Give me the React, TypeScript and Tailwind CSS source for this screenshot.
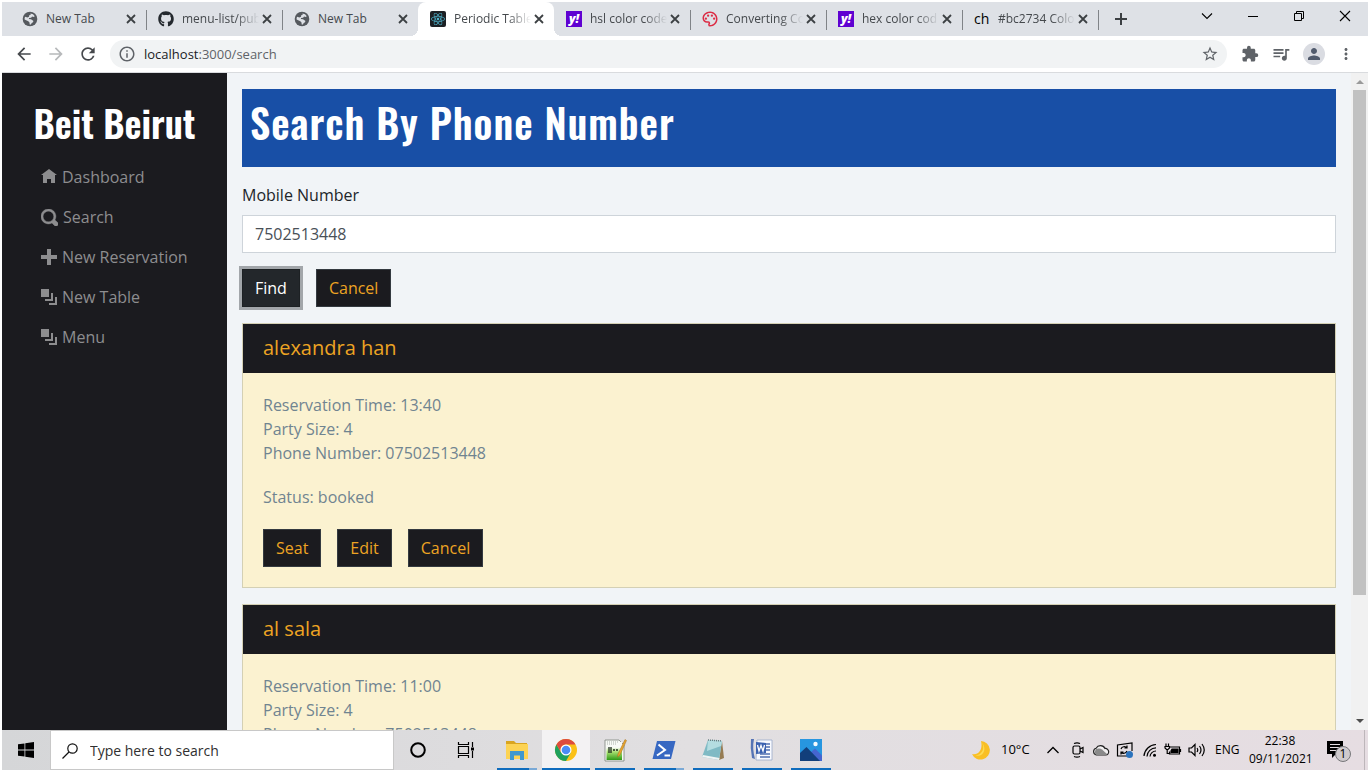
import React, { useState } from "react";
import {
  MdArrowBack,
  MdArrowForward,
  MdExtension,
  MdInfoOutline,
  MdMoreVert,
  MdOutlinePalette,
  MdPerson,
  MdQueueMusic,
  MdRefresh,
  MdStarBorder,
} from "react-icons/md";
import { FaGithub, FaReact } from "react-icons/fa";

/* ---------- Tab favicons ---------- */

const Globe = () => (
  <svg viewBox="0 0 16 16" className="size-4">
    <circle cx="8" cy="8" r="7.300" fill="#55595e" />
    <path
      d="M8.500 2.500q3 .3 4.300 2.700l-1.300.9-1.400-.6-1 1.200-2 .2-.3 1.200 2.200.2 2.500 1.800-.8 1.300-1 .6-.8 1.600-1.200-.1-.2-1.900-1.200-1.400L2.600 8.600q-.2-1.500.5-2.800l2.400.6 1.500-.6.2-1.500 1.500-.6z"
      fill="#dee1e6"
    />
  </svg>
);
const GitHub = () => <FaGithub className="size-4 text-[#24292e]" />;
const ReactLogo = () => (
  <span className="flex size-4 items-center justify-center rounded-xs bg-[#1c2024]">
    <FaReact className="size-[14px] text-[#4fb4cc]" />
  </span>
);
const Yahoo = () => (
  <span className="flex size-4 items-center justify-center bg-[#5f01d1] font-['Open_Sans',sans-serif] text-xs leading-none font-extrabold text-white italic">
    y!
  </span>
);
const Palette = () => <MdOutlinePalette className="size-[18px] shrink-0 -scale-x-100 text-[#dc2c45]" />;
const Ch = () => <span className="w-4 text-sm leading-4 font-medium text-black">ch</span>;

type Tab = { title: string; icon: () => React.ReactElement; active?: boolean; divider?: boolean };

const TABS: Tab[] = [
  { title: "New Tab", icon: Globe, divider: true },
  { title: "menu-list/pub", icon: GitHub, divider: true },
  { title: "New Tab", icon: Globe },
  { title: "Periodic Table", icon: ReactLogo, active: true },
  { title: "hsl color code", icon: Yahoo, divider: true },
  { title: "Converting Co", icon: Palette, divider: true },
  { title: "hex color cod", icon: Yahoo, divider: true },
  { title: "#bc2734 Colo", icon: Ch, divider: true },
];

function CloseMark() {
  return (
    <svg viewBox="0 0 10 10" className="size-[10px]" aria-hidden="true">
      <path d="M1 1l8 8M9 1l-8 8" stroke="#3c4043" strokeWidth="1.8" fill="none" />
    </svg>
  );
}

function TabStrip() {
  return (
    <div className="flex h-[34px] shrink-0 items-stretch bg-[#dee1e6] pl-2">
      {TABS.map((tab, i) => {
        const Icon = tab.icon;
        return (
          <div
            key={i}
            className={
              "relative flex w-[136px] min-w-0 items-center pl-3 text-xs text-[#45494d] " +
              (tab.active ? "rounded-t-lg bg-white" : "")
            }
          >
            <span className="flex size-4 shrink-0 items-center justify-center">
              <Icon />
            </span>
            <span
              className={
                "ml-2 min-w-0 flex-1 whitespace-nowrap " +
                (tab.title === "New Tab" ? "" : "[mask-image:linear-gradient(to_right,black_70%,transparent)]")
              }
            >
              {tab.title}
            </span>
            <button
              type="button"
              aria-label="Close tab"
              className="mr-[7px] flex size-4 shrink-0 items-center justify-center"
            >
              <CloseMark />
            </button>
            {tab.divider && <span className="absolute top-2 -right-px h-5 w-px bg-[#808387]" />}
            {tab.active && (
              <>
                <span className="absolute bottom-0 -left-2 size-2 bg-[radial-gradient(circle_at_0_0,#dee1e6_8px,white_8px)]" />
                <span className="absolute -right-2 bottom-0 size-2 bg-[radial-gradient(circle_at_100%_0,#dee1e6_8px,white_8px)]" />
              </>
            )}
          </div>
        );
      })}
      <button type="button" aria-label="New tab" className="flex w-[46px] items-center justify-center">
        <svg viewBox="0 0 12 12" className="size-3">
          <path d="M6 0v12M0 6h12" stroke="#3c4043" strokeWidth="2" />
        </svg>
      </button>
      <div className="ml-auto flex h-7 items-center text-black">
        <button type="button" aria-label="Search tabs" className="flex w-[46px] justify-center">
          <svg viewBox="0 0 12 12" className="size-3">
            <path d="M1 3.5l5 5 5-5" stroke="currentColor" strokeWidth="1.1" fill="none" />
          </svg>
        </button>
        <button type="button" aria-label="Minimise" className="flex w-[46px] justify-center">
          <svg viewBox="0 0 12 12" className="size-3">
            <path d="M1 6.5h10" stroke="currentColor" />
          </svg>
        </button>
        <button type="button" aria-label="Restore" className="flex w-[46px] justify-center">
          <svg viewBox="0 0 12 12" className="size-3" fill="none" stroke="currentColor">
            <path d="M1.5 3.5h7v7h-7zM3.5 3.5v-2h7v7h-2" />
          </svg>
        </button>
        <button type="button" aria-label="Close window" className="flex w-[46px] justify-center">
          <svg viewBox="0 0 12 12" className="size-3">
            <path d="M1 1l10 10M11 1L1 11" stroke="currentColor" strokeWidth="1.1" />
          </svg>
        </button>
      </div>
    </div>
  );
}

function AddressBar() {
  return (
    <div className="flex h-[37px] shrink-0 items-center border-b border-[#d9dbde] bg-white pr-[13px] pl-3 text-[#5f6368]">
      <button type="button" aria-label="Back" className="w-8 text-[#46494d]">
        <MdArrowBack className="size-5" />
      </button>
      <button type="button" aria-label="Forward" className="w-8 text-[#b7b9bb]">
        <MdArrowForward className="size-5" />
      </button>
      <button type="button" aria-label="Reload" className="w-8 text-[#46494d]">
        <MdRefresh className="size-5" />
      </button>
      <div className="flex h-7 min-w-0 flex-1 items-center rounded-full bg-[#f1f3f4] px-2">
        <MdInfoOutline className="size-[18px] shrink-0" />
        <a href="#search" className="ml-2 text-[13px] leading-5 text-[#5f6368]">
          <span className="text-[#202124]">localhost</span>:3000/search
        </a>
        <button type="button" aria-label="Bookmark" className="ml-auto">
          <MdStarBorder className="size-[18px]" />
        </button>
      </div>
      <button type="button" aria-label="Extensions" className="ml-[14px]">
        <MdExtension className="size-[18px]" />
      </button>
      <button type="button" aria-label="Media" className="ml-3">
        <MdQueueMusic className="size-5" />
      </button>
      <button
        type="button"
        aria-label="Profile"
        className="ml-3 flex size-[22px] items-center justify-center rounded-full bg-[#dadce2] text-[#515b6d]"
      >
        <MdPerson className="size-[18px]" />
      </button>
      <button type="button" aria-label="Menu" className="ml-3">
        <MdMoreVert className="size-[18px]" />
      </button>
    </div>
  );
}

/* ---------- Sidebar ---------- */

const GLYPHS = {
  home: "M4 0l-4 3h1v4h2v-2h2v2h2v-4.03l1 .03-4-3z",
  search:
    "M3.5 0c-1.93 0-3.5 1.57-3.5 3.5s1.57 3.5 3.5 3.5c.59 0 1.17-.14 1.66-.41a1 1 0 0 0 .13.13l1 1a1.02 1.02 0 1 0 1.44-1.44l-1-1a1 1 0 0 0-.16-.13c.27-.49.44-1.06.44-1.66 0-1.93-1.55-3.5-3.5-3.5zm0 1c1.39 0 2.5 1.11 2.5 2.5 0 .66-.24 1.27-.66 1.72-.01.01-.02.02-.03.03a1 1 0 0 0-.13.13c-.44.4-1.04.63-1.69.63-1.39 0-2.5-1.11-2.5-2.5s1.11-2.5 2.5-2.5z",
  plus: "M3 0v3h-3v2h3v3h2v-3h3v-2h-3v-3h-2z",
  layers: "M0 0v4h4v-4h-4zm5 2v3h-3v1h4v-4h-1zm2 2v3h-3v1h4v-4h-1z",
};

const NAV: { label: string; glyph: keyof typeof GLYPHS }[] = [
  { label: "Dashboard", glyph: "home" },
  { label: "Search", glyph: "search" },
  { label: "New Reservation", glyph: "plus" },
  { label: "New Table", glyph: "layers" },
  { label: "Menu", glyph: "layers" },
];

const DISPLAY = "font-['Oswald','Liberation_Sans_Narrow',sans-serif]";

function Sidebar() {
  return (
    <nav className="w-[225px] shrink-0 bg-[#1b1b1f] pt-[26px]">
      <a
        href="#home"
        className={DISPLAY + " block text-center text-[37px] leading-[48px] font-semibold whitespace-nowrap text-white"}
      >
        Beit Beirut
      </a>
      <ul className="mt-[10px] pl-[39px]">
        {NAV.map((item) => (
          <li key={item.label}>
            <a href={"#" + item.label} className="flex h-10 items-center gap-[5px] text-base text-[#8d8d8f]">
              <svg
                viewBox="0 0 8 8"
                className={
                  item.glyph === "search"
                    ? "size-[17px] fill-[#8d8d8f] stroke-[#8d8d8f] [stroke-width:0.2]"
                    : "size-4 fill-[#8d8d8f]"
                }
                aria-hidden="true"
              >
                <path d={GLYPHS[item.glyph]} />
              </svg>
              {item.label}
            </a>
          </li>
        ))}
      </ul>
    </nav>
  );
}

/* ---------- Search page ---------- */

const DARK_BUTTON = "h-[38px] border border-[#343a40] bg-[#1b1b1f] px-3 text-base leading-6 text-[#eda423]";

const RESERVATIONS = [
  { name: "alexandra han", time: "13:40", size: 4, phone: "07502513448" },
  { name: "al sala", time: "11:00", size: 4, phone: "7502513448" },
];

function ReservationCard({ name, time, size, phone }: (typeof RESERVATIONS)[number]) {
  return (
    <article className="mt-4 border border-[#d4d0b4] bg-[#fbf2d0]">
      <h2 className="bg-[#1b1b1f] px-5 pt-3 pb-[13px] text-xl leading-6 text-[#eda423]">{name}</h2>
      <div className="p-5 text-base leading-6 text-[#708490]">
        <p>Reservation Time: {time}</p>
        <p>Party Size: {size}</p>
        <p>Phone Number: {phone}</p>
        <p className="mt-5">Status: booked</p>
        <div className="mt-5 flex gap-4">
          <button type="button" className={DARK_BUTTON}>Seat</button>
          <button type="button" className={DARK_BUTTON}>Edit</button>
          <button type="button" className={DARK_BUTTON}>Cancel</button>
        </div>
      </div>
    </article>
  );
}

function SearchPage() {
  const [mobile, setMobile] = useState("7502513448");
  return (
    <main className="min-w-0 flex-1 overflow-hidden bg-[#f1f4f7] px-[15px] pt-4">
      <h1
        className={
          DISPLAY +
          " bg-[#184fa6] px-2 pt-[9px] pb-[21px] text-[40px] leading-[48px] font-semibold tracking-wide whitespace-nowrap text-white"
        }
      >
        Search By Phone Number
      </h1>
      <form onSubmit={(e) => e.preventDefault()}>
        <label htmlFor="mobile" className="mt-4 block text-base leading-6 text-[#212529]">
          Mobile Number
        </label>
        <input
          id="mobile"
          type="text"
          value={mobile}
          onChange={(e) => setMobile(e.target.value)}
          className="mt-2 block h-[38px] w-full border border-[#ced4da] bg-white px-3 text-base text-[#495057] outline-none"
        />
        <div className="mt-4 flex gap-4">
          <button
            type="submit"
            className="h-[38px] border border-[#1d2124] bg-[#23272b] px-3 text-base leading-6 text-white ring-3 ring-[#a2a6aa]"
          >
            Find
          </button>
          <button type="button" className={DARK_BUTTON}>Cancel</button>
        </div>
      </form>
      {RESERVATIONS.map((r) => (
        <ReservationCard key={r.name} {...r} />
      ))}
    </main>
  );
}

function ScrollBar() {
  return (
    <div className="flex w-[17px] shrink-0 flex-col items-center justify-between bg-[#f1f1f1]" aria-hidden="true">
      <svg viewBox="0 0 17 17" className="size-[17px] shrink-0">
        <path d="M5 11h8l-4-4z" fill="#9a9a9a" />
      </svg>
      <div className="w-[13px] flex-1">
        <div className="h-[81%] bg-[#c1c1c1]" />
      </div>
      <svg viewBox="0 0 17 17" className="size-[17px] shrink-0">
        <path d="M5 6h8l-4 4z" fill="#4d4d4d" />
      </svg>
    </div>
  );
}

/* ---------- Taskbar ---------- */

const ExplorerIcon = () => (
  <svg viewBox="0 0 24 24" className="size-6">
    <path d="M1 3h8l2 2h11v5H1z" fill="#d9a520" />
    <path d="M1 6h22v15H1z" fill="#fcd354" />
    <path d="M5 13h14v9h-4v-4.500H9V22H5z" fill="#3f98cf" />
  </svg>
);
const ChromeIcon = () => (
  <svg viewBox="0 0 24 24" className="size-6">
    <circle cx="12" cy="12" r="11" fill="#fbc116" />
    <path d="M2.470 6.500A11 11 0 0 0 12 23l4.760-8.250L12 12 7.240 14.750z" fill="#1fa15d" />
    <path d="M2.470 6.500A11 11 0 0 1 21.530 6.500H12a5.500 5.500 0 0 0-4.760 8.250z" fill="#dd4b3e" />
    <circle cx="12" cy="12" r="5.500" fill="#fff" />
    <circle cx="12" cy="12" r="4.300" fill="#4a8cf6" />
  </svg>
);
const NotepadPlusIcon = () => (
  <svg viewBox="0 0 24 24" className="size-6">
    <defs>
      <linearGradient id="page-fade" x1="0" y1="0" x2="0" y2="1">
        <stop offset="0.3" stopColor="#f8faf6" />
        <stop offset="0.55" stopColor="#a8e070" />
        <stop offset="1" stopColor="#2f9a17" />
      </linearGradient>
    </defs>
    <path d="M2 2h14l5 5v16H2z" fill="#f7f9f5" stroke="#7c837b" strokeWidth=".8" />
    <path d="M3.500 4H19v18H3.500z" fill="url(#page-fade)" />
    <path d="M4 4h11M4 6h10" stroke="#aab2ab" strokeDasharray="1 1" />
    <path d="M6 9v6M8 9v6M10 12h2M13 12h2" stroke="#1c2a1b" strokeWidth="1.300" />
    <path d="M22 1.500l1.500 1L17 17l-2.500 2 .5-3z" fill="#e9a52a" stroke="#9d6d23" strokeWidth=".5" />
  </svg>
);
const PowerShellIcon = () => (
  <svg viewBox="0 0 24 24" className="size-6">
    <path d="M5 3h18.500l-4.500 18H.5z" fill="#3768c2" />
    <path d="M6.500 6.500l6.500 5.500-8 5.500M12.500 17.500h5.500" fill="none" stroke="#fff" strokeWidth="2" />
  </svg>
);
const NotepadIcon = () => (
  <svg viewBox="0 0 24 24" className="size-6">
    <path d="M21 3l2 17-5 2z" fill="#967c53" />
    <path d="M7 2l14 1-3 19-17-3z" fill="#7fbac4" />
    <path d="M7 2l14 1-1 5L6 13z" fill="#b4dde1" />
    <path d="M1 19l17 3 .5-2L2 17z" fill="#eef3f3" />
    <path d="M7 2l14 1" stroke="#667d80" strokeWidth="1.500" strokeDasharray="1 1" />
  </svg>
);
const WordIcon = () => (
  <svg viewBox="0 0 24 24" className="size-6">
    <path d="M7 2h15v20H6z" fill="#f8faff" stroke="#99a9c9" strokeWidth=".8" />
    <path d="M15 6h5M15 9h5M15 12h5M10 16h10M10 19h10" stroke="#5070b0" strokeWidth="1.300" />
    <path d="M1 1h3q-2 9 1 20l-3-1Q0 10 1 1z" fill="#5574b5" />
    <path d="M6 4l10 1v10L6 16z" fill="#3b62b0" />
    <path d="M7.500 7l1.500 6 2-5.500 2 5.500 1.500-6" fill="none" stroke="#fff" strokeWidth="1.300" />
  </svg>
);
const PhotosIcon = () => (
  <svg viewBox="0 0 24 24" className="size-6">
    <path d="M1 1h22v22H1z" fill="#2796e0" />
    <path d="M11 15l5-4.500 7 7V23H11z" fill="#4565cf" />
    <path d="M1 15l6.500-6L21 23H1z" fill="#123f7b" />
    <circle cx="16.500" cy="6" r="2.200" fill="#f4fbff" />
  </svg>
);

const APPS = [
  { name: "File Explorer", icon: ExplorerIcon, stacked: true },
  { name: "Chrome", icon: ChromeIcon, active: true },
  { name: "Notepad++", icon: NotepadPlusIcon },
  { name: "PowerShell", icon: PowerShellIcon, stacked: true },
  { name: "Notepad", icon: NotepadIcon },
  { name: "Word", icon: WordIcon },
  { name: "Photos", icon: PhotosIcon },
];

function Tray() {
  return (
    <div className="ml-auto flex items-center text-black">
      <svg viewBox="0 0 20 20" className="size-5">
        <path d="M10 1a9.300 9.300 0 1 1-9 13c7 1.500 11-5 9-13z" fill="#f9bf25" />
        <path d="M10.500 2c4 5 1 13-6 13.500 8 2 12-7 6-13.500z" fill="#fddc55" />
      </svg>
      <span className="ml-[10px] w-[30px] text-[13px] whitespace-nowrap">10°C</span>
      <svg viewBox="0 0 14 14" className="ml-[15px] size-[14px]" fill="none" stroke="currentColor" strokeWidth="1.3">
        <path d="M1.500 10L7 4.500l5.500 5.500" />
      </svg>
      <svg viewBox="0 0 16 16" className="ml-[10px] size-4" fill="none" stroke="currentColor" strokeWidth="1.2">
        <rect x="3" y="4" width="7" height="8" rx="1.500" />
        <path d="M10 7l3-1.500v5L10 9M4 1.500q3-1.200 6 0M4 14.500q3 1.200 6 0" />
      </svg>
      <svg viewBox="0 0 18 16" className="ml-[6px] h-4 w-[18px]">
        <path d="M4.500 13a3.500 3.500 0 0 1-.4-6.800A5 5 0 0 1 13 6.500a3.200 3.200 0 0 1 .8 6.500z" fill="#f2f0f1" stroke="#222" strokeWidth="1.200" />
        <path d="M4 7q4-1 6 .5l5 4.500q-1 1-2 1H5Q1 12 4 7z" fill="#8a8a8a" />
      </svg>
      <svg viewBox="0 0 18 18" className="ml-[6px] size-[18px]" fill="none" stroke="currentColor" strokeWidth="1.2">
        <path d="M11 15H1.500V4L16 2v8M5 8a3.500 3.500 0 0 1 6-1M11 4.500V7H8.500M11 10a3.500 3.500 0 0 1-6 1M5 13.500V11h2.500" />
        <circle cx="13.500" cy="13.500" r="3.500" fill="#2b73bd" stroke="none" />
      </svg>
      <svg viewBox="0 0 16 16" className="ml-2 size-4" fill="none" stroke="currentColor" strokeWidth="1.2">
        <path d="M2 14A12.500 12.500 0 0 1 14 2.500M5 14.500A9 9 0 0 1 14 5.800M8 14.500A6 6 0 0 1 14 9" />
        <circle cx="12.500" cy="13.300" r="1.500" fill="currentColor" stroke="none" />
      </svg>
      <svg viewBox="0 0 18 16" className="ml-[6px] h-4 w-[18px]" fill="none" stroke="currentColor" strokeWidth="1.2">
        <path d="M6 5h9.500v7H5.500V9.500M16.500 7v3" />
        <path d="M8 7h6v3.500H7V9z" fill="currentColor" />
        <path d="M2 1.500v3M4.500 1.500v3M1 4.500h4.500v1.500l-1.500 1.500h-1.500L1 6zM3.200 7.500v4h3" />
      </svg>
      <svg viewBox="0 0 18 16" className="ml-[6px] h-4 w-[18px]" fill="none" stroke="currentColor" strokeWidth="1.2">
        <path d="M1 6v4h2.500L7 13.500v-11L3.500 6zM9 6q1.500 2 0 4M11.500 4q3 4 0 8M14 2q4.500 6 0 12" />
      </svg>
      <span className="ml-[9px] w-6 text-xs">ENG</span>
      <div className="ml-[10px] w-[62px] text-center text-xs leading-[18px] whitespace-nowrap">
        <div>22:38</div>
        <div>09/11/2021</div>
      </div>
      <button type="button" aria-label="Notifications" className="relative ml-4 size-6">
        <svg viewBox="0 0 24 24" className="size-6">
          <path d="M0 3h16v13H9l-4 4v-4H0z" fill="#000" />
          <path d="M3 6.500h10M3 9.500h10M3 12.500h7" stroke="#e4dde1" />
        </svg>
        <span className="absolute top-2 left-2 flex size-4 items-center justify-center rounded-full border border-[#77777a] bg-[#cfcacd] text-xs leading-none">
          1
        </span>
      </button>
      <span className="ml-[13px] h-10 w-1 border-l border-[#bdb6ba]" />
    </div>
  );
}

function Taskbar() {
  return (
    <footer className="flex h-10 shrink-0 items-stretch bg-linear-to-r from-[#d5d6d8] via-[#e1dfe1] to-[#e6dde2]">
      <button type="button" aria-label="Start" className="flex w-12 items-center justify-center">
        <svg viewBox="0 0 16 16" className="size-4">
          <path d="M0 2.300L6.500 1.400v6.200H0zM7.300 1.300L16 0v7.600H7.300zM0 8.400h6.500v6.200L0 13.700zM7.300 8.400H16V16l-8.700-1.300z" />
        </svg>
      </button>
      <label className="flex w-[344px] items-center border border-[#c8c8c8] bg-white pt-px pl-[11px]">
        <svg viewBox="0 0 16 16" className="size-4 shrink-0" fill="none" stroke="#111" strokeWidth="1.2">
          <circle cx="10.500" cy="5.500" r="4.700" />
          <path d="M7 9l-6.500 6.500" />
        </svg>
        <input
          type="text"
          aria-label="Taskbar search"
          placeholder="Type here to search"
          className="ml-3 min-w-0 flex-1 text-sm outline-none placeholder:text-[#303030]"
        />
      </label>
      <button type="button" aria-label="Cortana" className="flex w-12 items-center justify-center">
        <svg viewBox="0 0 18 18" className="size-[18px]">
          <circle cx="9" cy="9" r="6.800" fill="none" stroke="#000" strokeWidth="2" />
        </svg>
      </button>
      <button type="button" aria-label="Task view" className="flex w-12 items-center justify-center">
        <svg viewBox="0 0 18 18" className="size-[18px]" fill="none" stroke="#000" strokeWidth="1.2">
          <path d="M1.500 5.500h10v7h-10zM1.500 1v2.500h10V1M1.500 17v-2.500h10V17M15.500 1v5M15.500 10v7" />
          <path d="M14 6.500h3v3h-3z" fill="#000" stroke="none" />
        </svg>
      </button>
      <div className="ml-[3px] flex gap-px">
        {APPS.map((app) => {
          const Icon = app.icon;
          return (
            <button
              key={app.name}
              type="button"
              aria-label={app.name}
              className={"flex w-12 flex-col items-center " + (app.active ? "bg-[#f3f2f3]" : "")}
            >
              <span className="flex flex-1 items-center pt-px">
                <Icon />
              </span>
              <span className={"flex h-[2px] bg-[#0f6cbd] " + (app.active ? "w-12" : "w-10")}>
                {app.stacked && <span className="ml-auto w-2 bg-[#7aa9d6]" />}
              </span>
            </button>
          );
        })}
      </div>
      <Tray />
    </footer>
  );
}

export default function App() {
  return (
    <div className="flex h-screen flex-col bg-white p-[2px] font-['Open_Sans',sans-serif]">
      <TabStrip />
      <AddressBar />
      <div className="flex min-h-0 flex-1">
        <Sidebar />
        <SearchPage />
        <ScrollBar />
      </div>
      <Taskbar />
    </div>
  );
}
